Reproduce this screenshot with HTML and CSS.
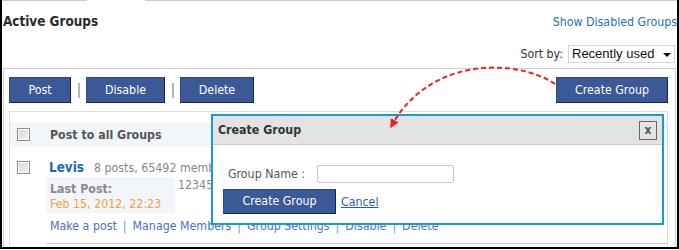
FILE: index.html
```html
<!DOCTYPE html>
<html>
<head>
<meta charset="utf-8">
<link rel="stylesheet" href="styles.css">
</head>
<body>
<div class="frame">
  <div class="topline"><span class="seg seg-a"></span><span class="seg-gap"></span><span class="seg seg-b"></span></div>
  <div class="head">
    <h1 class="title">Active Groups</h1>
    <a class="show-link">Show Disabled Groups</a>
  </div>
  <div class="sortrow">
    <span class="sort-label">Sort by:</span>
    <div class="select">Recently used<span class="caret"></span></div>
  </div>
  <div class="panel">
    <div class="toolbar">
      <button class="btn w-post">Post</button>
      <span class="sep"></span>
      <button class="btn w-disable">Disable</button>
      <span class="sep"></span>
      <button class="btn w-delete">Delete</button>
      <span class="spacer"></span>
      <button class="btn w-create">Create Group</button>
    </div>
    <div class="list">
      <div class="list-head">
        <span class="cb"></span>
        <span class="lh-title">Post to all Groups</span>
      </div>
      <div class="group">
        <span class="cb cb-row"></span>
        <div class="g-body">
          <div class="g-title"><a class="g-name">Levis</a><span class="g-meta">8 posts, 65492 members</span></div>
          <div class="g-info">
            <div class="last">
              <div class="last-label">Last Post:</div>
              <div class="last-date">Feb 15, 2012, 22:23</div>
            </div>
            <div class="desc">1234567890</div>
          </div>
          <div class="g-links">
            <a>Make a post</a><span class="lsep">|</span><a>Manage Members</a><span class="lsep">|</span><a>Group Settings</a><span class="lsep">|</span><a>Disable</a><span class="lsep">|</span><a>Delete</a>
          </div>
          <div class="g-rule"></div>
        </div>
      </div>
    </div>
  </div>

  <div class="dialog">
    <div class="dlg-head">
      <span class="dlg-title">Create Group</span>
      <span class="dlg-close">x</span>
    </div>
    <div class="dlg-row">
      <label class="dlg-label">Group Name :</label>
      <span class="dlg-input"></span>
    </div>
    <div class="dlg-actions">
      <button class="btn w-dlg">Create Group</button>
      <a class="cancel">Cancel</a>
    </div>
  </div>

  <svg class="arrow" width="679" height="250" viewBox="0 0 679 250">
    <defs>
      <marker id="ah" viewBox="0 0 10 10" refX="6" refY="5" markerWidth="9" markerHeight="9" markerUnits="userSpaceOnUse" orient="auto">
        <path d="M0,0 L10,5 L0,10 z" fill="#e8241b"/>
      </marker>
    </defs>
    <path d="M555,84 C520,60 432,54 392,125" fill="none" stroke="#e8241b" stroke-width="2" stroke-dasharray="5 3" marker-end="url(#ah)"/>
  </svg>
</div>
</body>
</html>
```
FILE: styles.css
```css
* { box-sizing: border-box; }
html, body { margin: 0; padding: 0; background: #fff; }
body {
  font-family: "DejaVu Sans Condensed", "DejaVu Sans", sans-serif;
  font-stretch: condensed;
  font-size: 12.3px;
  color: #333;
}
.frame {
  position: relative;
  width: 679px;
  height: 249px;
  border-left: 2px solid #000;
  border-right: 2px solid #000;
  border-bottom: 2px solid #000;
  display: flex;
  flex-direction: column;
  overflow: hidden;
}
.topline { display: flex; height: 1px; flex: none; margin-left: -2px; }
.seg { background: #c8c8c8; height: 1px; }
.seg-a { width: 87px; }
.seg-gap { width: 58px; }
.seg-b { flex: 1; }

.head {
  display: flex;
  align-items: baseline;
  justify-content: space-between;
  padding: 13px 0 0 1px;
  height: 30px;
  flex: none;
}
.title { margin: 0; font-size: 13.4px; font-weight: bold; line-height: 16px; color: #2b2b2b; }
.show-link { color: #1a72b8; font-size: 12.3px; line-height: 16px; }

.sortrow {
  display: flex;
  justify-content: flex-end;
  align-items: center;
  gap: 5px;
  margin-top: 14px;
  padding-right: 2px;
  height: 18px;
  flex: none;
}
.sort-label { color: #333; }
.select {
  position: relative;
  width: 107px;
  height: 18px;
  border: 1px solid #d6d6d6;
  font-family: "Liberation Sans", Arial, sans-serif;
  font-stretch: normal;
  font-size: 13px;
  line-height: 16px;
  color: #111;
  padding-left: 3px;
}
.caret {
  position: absolute;
  right: 3px;
  top: 7px;
  border-left: 4px solid transparent;
  border-right: 4px solid transparent;
  border-top: 4px solid #111;
}

.panel {
  flex: 1;
  margin: 5px 1px 0 1px;
  border: 1px solid #d0d0d0;
  border-bottom: none;
  padding: 8px 7px 0 5px;
  display: flex;
  flex-direction: column;
}
.toolbar { display: flex; align-items: center; height: 26px; flex: none; }
.btn {
  font-family: inherit;
  font-stretch: condensed;
  font-size: 12.3px;
  color: #fff;
  background: #3b5897;
  border: 1px solid #2f4a85;
  border-right-color: #16245a;
  border-bottom-color: #16245a;
  height: 26px;
  padding: 0;
  text-align: center;
  line-height: 24px;
}
.w-post { width: 62px; }
.w-disable { width: 79px; }
.w-delete { width: 74px; }
.w-create { width: 112px; }
.w-dlg { width: 113px; height: 25px; line-height: 23px; }
.sep { width: 2px; height: 15px; background: #b4b4b4; margin: 0 6px 0 7px; }
.spacer { flex: 1; }

.list {
  flex: 1;
  margin-top: 8px;
  border: 1px solid #dcdcdc;
  border-bottom: none;
}
.list-head {
  margin-top: 10px;
  height: 25px;
  background: #f2f5f9;
  display: flex;
  align-items: center;
  padding-left: 7px;
}
.cb {
  width: 13px;
  height: 13px;
  border: 1px solid #8e8e8e;
  background: linear-gradient(135deg, #d4d4d4, #f6f6f6);
  box-shadow: inset 0 0 0 1px #fff;
  flex: none;
}
.lh-title { margin-left: 20px; font-weight: bold; color: #555; }

.group { display: flex; padding: 13px 0 0 7px; }
.cb-row { margin-top: 1px; }
.g-body { margin-left: 16px; flex: 1; }
.g-title { display: flex; align-items: baseline; height: 16px; padding-left: 3px; line-height: 16px; }
.g-name { font-size: 13.4px; font-weight: bold; color: #1a6bb0; }
.g-meta { margin-left: 10px; color: #888; }
.g-info { display: flex; margin-top: 1px; }
.last {
  width: 129px;
  height: 36px;
  background: #f2f5f9;
  padding: 5px 0 1px 4px;
  line-height: 15px;
}
.last-label { font-weight: bold; color: #8a8a8a; }
.last-date { color: #f5a03d; }
.desc { padding: 1px 0 0 3px; line-height: 15px; color: #888; }
.g-links { margin-top: 6px; padding-left: 4px; line-height: 15px; color: #4d6ec9; }
.lsep { color: #5aa2e6; margin: 0 6px; }
.g-rule { margin-top: 9px; border-top: 1px solid #cfcfcf; }

.dialog {
  position: absolute;
  left: 209px;
  top: 114px;
  width: 453px;
  height: 111px;
  border: 2px solid #1a9ad0;
  background: #fff;
}
.dlg-head {
  height: 29px;
  background: #e3e3e3;
  border-bottom: 1px solid #cbcbcb;
  display: flex;
  align-items: center;
  justify-content: space-between;
  padding: 0 5px;
}
.dlg-title { font-weight: bold; color: #333; line-height: 28px; }
.dlg-close {
  width: 18px;
  height: 19px;
  border: 1px solid #666;
  text-align: center;
  line-height: 16px;
  font-weight: bold;
  color: #555;
  font-size: 12px;
}
.dlg-row { display: flex; align-items: center; margin-top: 20px; padding-left: 15px; height: 18px; }
.dlg-label { color: #555; width: 89px; }
.dlg-input {
  width: 137px;
  height: 18px;
  border: 1px solid #c9c9c9;
  border-radius: 2px;
  background: #fff;
}
.dlg-actions { display: flex; align-items: center; margin-top: 6px; padding-left: 10px; }
.cancel { margin-left: 5px; color: #2a5db0; text-decoration: underline; }

.arrow { position: absolute; left: -2px; top: 0; pointer-events: none; }
```
